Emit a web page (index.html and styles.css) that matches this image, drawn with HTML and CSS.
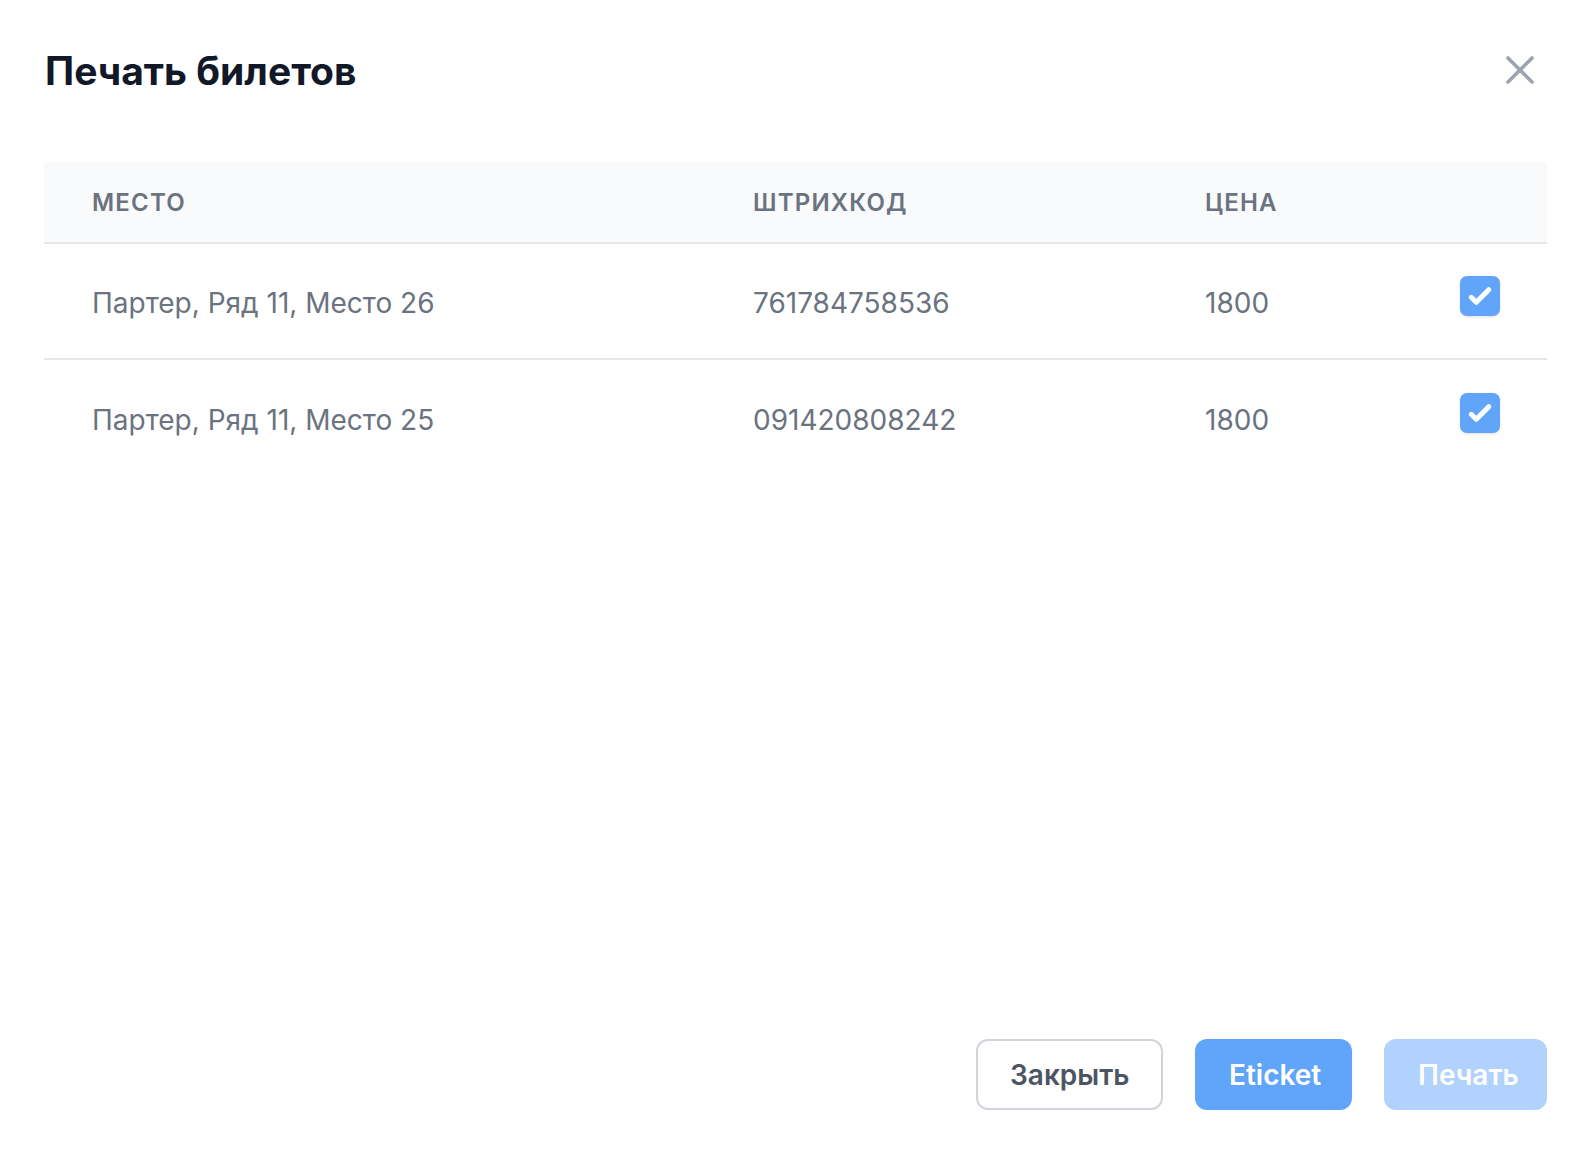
FILE: index.html
```html
<!DOCTYPE html>
<html>
    <head>
        <title>Печать билетов</title>
        <meta charset="UTF-8">
        <link rel="stylesheet" href="styles.css">
    </head>
    <body>
        <div class="modal">
            <div class="modal-head">
                <h2>Печать билетов</h2>
                <button class="btn-close" type="button">
                    <svg viewBox="0 0 24 24" width="48" height="48" fill="none" stroke="currentColor" stroke-width="1.8" stroke-linecap="round">
                        <path d="M6 18L18 6M6 6l12 12"/>
                    </svg>
                </button>
            </div>

            <div class="tabela">
                <div class="linha cabecalho">
                    <div class="celula">Место</div>
                    <div class="celula">Штрихкод</div>
                    <div class="celula">Цена</div>
                    <div class="celula"></div>
                </div>
                <div class="linha">
                    <div class="celula">Партер, Ряд 11, Место 26</div>
                    <div class="celula">761784758536</div>
                    <div class="celula">1800</div>
                    <div class="celula"><span class="check"><svg viewBox="0 0 16 16" fill="#fff"><path d="M12.207 4.793a1 1 0 010 1.414l-5 5a1 1 0 01-1.414 0l-2-2a1 1 0 011.414-1.414L6.5 9.086l4.293-4.293a1 1 0 011.414 0z"/></svg></span></div>
                </div>
                <div class="linha sem-borda">
                    <div class="celula">Партер, Ряд 11, Место 25</div>
                    <div class="celula">091420808242</div>
                    <div class="celula">1800</div>
                    <div class="celula"><span class="check"><svg viewBox="0 0 16 16" fill="#fff"><path d="M12.207 4.793a1 1 0 010 1.414l-5 5a1 1 0 01-1.414 0l-2-2a1 1 0 011.414-1.414L6.5 9.086l4.293-4.293a1 1 0 011.414 0z"/></svg></span></div>
                </div>
            </div>

            <div class="rodape">
                <button class="btn btn-branco" type="button">Закрыть</button>
                <button class="btn btn-azul" type="button">Eticket</button>
                <button class="btn btn-azul desativado" type="button" disabled>Печать</button>
            </div>
        </div>
    </body>
</html>
```

FILE: styles.css
```css
* {
    margin: 0;
    padding: 0;
    box-sizing: border-box;
    font-family: Inter, "Noto Sans", sans-serif;
}
body {
    background-color: #fff;
}
.modal {
    display: flex;
    flex-direction: column;
    height: 1150px;
    padding: 40px 43px 40px 44px;
}
.modal-head {
    display: flex;
    justify-content: space-between;
    align-items: center;
    height: 60px;
    padding-left: 1px;
}
.modal-head h2 {
    font-size: 39px;
    font-weight: 700;
    color: #111827;
}
.btn-close {
    display: flex;
    border: none;
    background: none;
    color: #9ca3af;
    margin-right: 3px;
}
.tabela {
    margin-top: 62px;
    flex: 1;
}
.linha {
    display: grid;
    grid-template-columns: 661px 452px 255px 1fr;
    border-bottom: 2px solid #e5e7eb;
    height: 116px;
    align-items: center;
}
.linha.sem-borda {
    border-bottom: none;
}
.celula {
    padding: 3px 48px 0;
    font-size: 28px;
    line-height: 40px;
    color: #6b7280;
}
.cabecalho {
    height: 82px;
    background-color: #f9fafb;
}
.cabecalho .celula {
    font-size: 24px;
    line-height: 32px;
    font-weight: 600;
    text-transform: uppercase;
    letter-spacing: 0.05em;
    padding-top: 1px;
}
.check {
    display: flex;
    width: 40px;
    height: 40px;
    border-radius: 7px;
    background-color: #60a5fa;
    box-shadow: 0 1px 3px rgba(0, 0, 0, 0.12);
    margin-top: -14px;
}
.check svg {
    width: 40px;
    height: 40px;
}
.rodape {
    display: flex;
    justify-content: flex-end;
    gap: 32px;
}
.btn {
    height: 71px;
    padding: 0 32px;
    border-radius: 12px;
    font-size: 28px;
    font-weight: 600;
    border: 2px solid transparent;
}
.btn-branco {
    width: 187px;
    background-color: #fff;
    border-color: #d1d5db;
    color: #4b5563;
}
.btn-azul {
    width: 157px;
    background-color: #60a5fa;
    color: #fff;
}
.btn-azul.desativado {
    width: 163px;
    background-color: #b0d2fd;
}
```
